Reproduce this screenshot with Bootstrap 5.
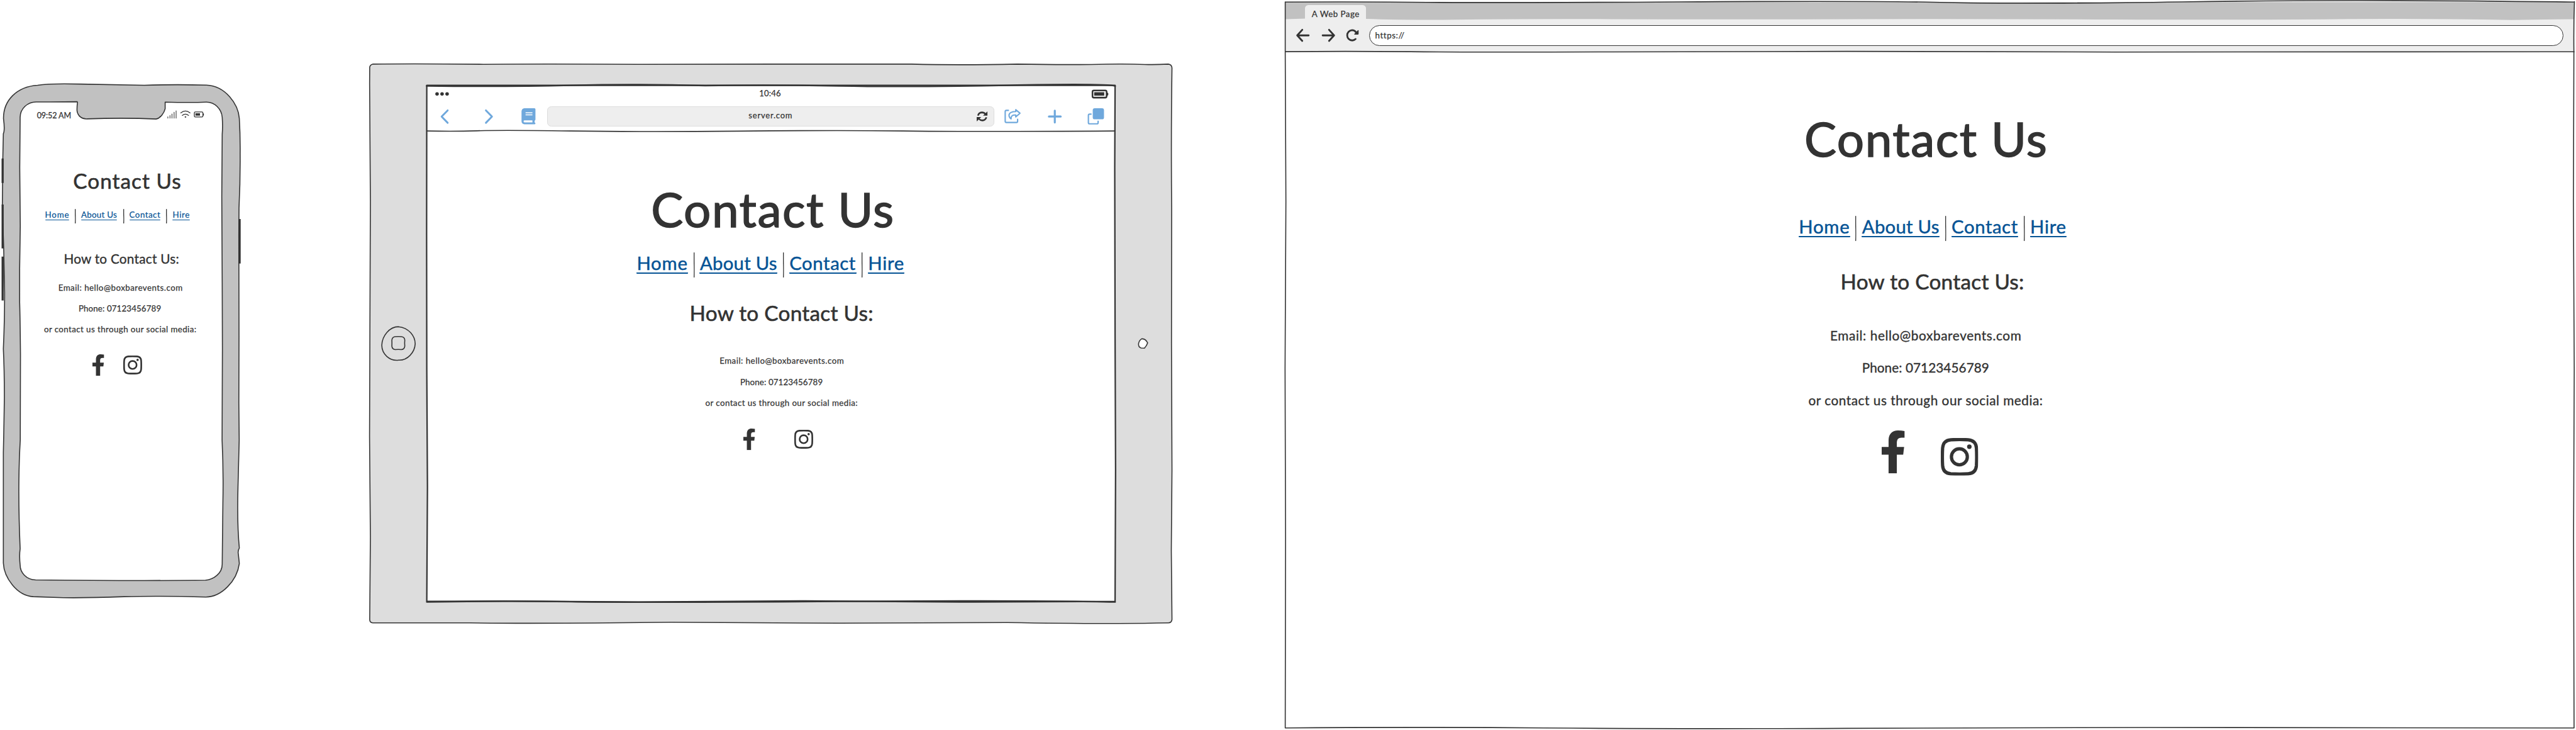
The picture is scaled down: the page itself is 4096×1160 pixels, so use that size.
<!DOCTYPE html>
<html lang="en">
<head>
<meta charset="utf-8">
<meta name="viewport" content="width=device-width, initial-scale=1">
<title>Contact Us wireframes</title>
<link href="https://cdn.jsdelivr.net/npm/bootstrap@5.3.0/dist/css/bootstrap.min.css" rel="stylesheet">
<script src="https://cdn.jsdelivr.net/npm/bootstrap@5.3.0/dist/js/bootstrap.bundle.min.js"></script>
<style>
/* --u is one drawing unit; every size below is a multiple of it */
:root{--u:.53375px;--ink:#333;--blue:#6fa8dc}
body{font-family:Lato,"Open Sans",sans-serif;color:var(--ink);background:#fff;line-height:1.2;white-space:nowrap;-webkit-text-stroke:.25px currentColor;overflow:hidden}
svg{display:block;flex:none;overflow:visible}
.board{height:1160px}
.device{height:1160px;flex:none}
.device-phone{width:calc(730*var(--u));margin-right:calc(360*var(--u));padding-top:calc(330*var(--u))}
.device-tablet{width:calc(2410*var(--u));margin-right:calc(325*var(--u));padding-top:calc(257*var(--u))}
.device-desktop{width:calc(3849*var(--u));padding-top:calc(6*var(--u))}
.frame{left:0;top:0;height:100%;z-index:-1}
.device-phone .frame{width:calc(730*var(--u))}
.device-tablet .frame{width:calc(2410*var(--u))}
.device-desktop .frame{width:calc(3849*var(--u))}
.frame path,.frame circle{stroke:var(--ink);stroke-width:3;stroke-linejoin:round;stroke-linecap:round}
.frame .heavy{stroke-width:4.2}
.frame .plain{stroke:none}

/* type */
h1,h2,p{margin:0;line-height:1.2;font-weight:400;color:var(--ink)}
.t-xl{font-size:calc(143.1*var(--u));letter-spacing:.0205em;-webkit-text-stroke-width:.02em}
.t-lg{font-size:calc(62.5*var(--u));-webkit-text-stroke-width:.018em}
.t-md{font-size:calc(38.9*var(--u));-webkit-text-stroke-width:.018em}
.t-sm{font-size:calc(25*var(--u))}
h1.t-lg{letter-spacing:.030em}
h2.t-lg{letter-spacing:.0075em}
h2.t-md{letter-spacing:.012em}
.mail{letter-spacing:.0295em}.tel{letter-spacing:.003em}.social{letter-spacing:.0252em}
.mail.t-sm{letter-spacing:.0358em}.tel.t-sm{letter-spacing:.009em}.social.t-sm{letter-spacing:.031em}

/* link bar */
.site-nav a{display:block;height:calc(65*var(--u));line-height:calc(66*var(--u));font-size:calc(54.9*var(--u));letter-spacing:.02em;text-align:center;color:#055395;text-decoration:none;border-bottom:calc(3.8*var(--u)) solid #055395;border-radius:1px;-webkit-text-stroke-width:.016em}
.site-nav .l1{width:calc(154*var(--u));letter-spacing:.027em}
.site-nav .l2{width:calc(232.6*var(--u));letter-spacing:.009em}
.site-nav .l3{width:calc(200.3*var(--u))}
.site-nav .l4{width:calc(110*var(--u));letter-spacing:.026em}
.site-nav .sep{width:calc(3*var(--u));height:calc(75*var(--u));margin:calc(1.3*var(--u)) calc(15.2*var(--u)) 0 calc(15.9*var(--u))}
.device-phone .site-nav a{height:calc(31.2*var(--u));line-height:calc(30*var(--u));font-size:calc(25*var(--u));border-bottom-width:calc(2.4*var(--u));margin-top:calc(3.3*var(--u));letter-spacing:.036em}
.device-phone .site-nav .l1{width:calc(71.3*var(--u));letter-spacing:.064em}
.device-phone .site-nav .l2{width:calc(108*var(--u));letter-spacing:.021em}
.device-phone .site-nav .l3{width:calc(93*var(--u))}
.device-phone .site-nav .l4{width:calc(51*var(--u));letter-spacing:.052em}
.device-phone .site-nav .sep{height:calc(43.5*var(--u));margin:0 calc(15.8*var(--u)) 0 calc(17.2*var(--u))}

/* phone rhythm */
.device-phone .status{font-size:calc(23.6*var(--u));letter-spacing:-.01em;margin-left:calc(110*var(--u));height:calc(28.3*var(--u))}
.status .time{width:calc(101*var(--u))}
.status .sig{margin-left:calc(288*var(--u))}
.device-phone h1{margin:calc(142*var(--u)) 0 0 calc(218*var(--u))}
.device-phone .site-nav{margin:calc(46.2*var(--u)) 0 0 calc(134*var(--u));height:calc(43.5*var(--u))}
.device-phone h2{margin:calc(82.2*var(--u)) 0 0 calc(190*var(--u))}
.device-phone .mail{margin:calc(47.1*var(--u)) 0 0 calc(173.6*var(--u))}
.device-phone .tel{margin:calc(32.3*var(--u)) 0 0 calc(234*var(--u))}
.device-phone .social{margin:calc(32.7*var(--u)) 0 0 calc(131*var(--u))}
.device-phone .icons{margin:calc(59.7*var(--u)) 0 0 calc(274.7*var(--u));gap:calc(57*var(--u))}
.fb{width:calc(35*var(--u));height:calc(64*var(--u))}
.ig{width:calc(56*var(--u));height:calc(56*var(--u));margin-top:calc(4*var(--u))}

/* tablet rhythm */
.tab-status{height:calc(46*var(--u));margin-left:calc(182*var(--u));width:calc(2049*var(--u));font-size:calc(24.3*var(--u));padding:0 calc(20*var(--u)) 0 calc(22*var(--u))}
.tab-status .clock{padding-top:calc(7*var(--u));letter-spacing:.018em;margin-right:calc(7*var(--u))}
.tab-bar{height:calc(87*var(--u));margin-left:calc(220*var(--u))}
.url-pill{width:calc(1332.3*var(--u));height:calc(61.5*var(--u));margin:0 calc(31*var(--u)) 0 calc(33.7*var(--u));background:#eee;border:calc(3.4*var(--u)) solid #ddd;border-radius:calc(12*var(--u));font-size:calc(24.3*var(--u));letter-spacing:.062em;padding:0 calc(17*var(--u)) 0 calc(50*var(--u))}
.url-pill span{padding-bottom:calc(4*var(--u))}
.device-tablet h1{margin:calc(146*var(--u)) 0 0 calc(849.7*var(--u))}
.device-tablet .site-nav{margin:calc(41.7*var(--u)) 0 0 calc(806*var(--u));height:calc(75.9*var(--u))}
.device-tablet h2{margin:calc(69.2*var(--u)) 0 0 calc(964.6*var(--u))}
.device-tablet .mail{margin:calc(89.5*var(--u)) 0 0 calc(1053.7*var(--u))}
.device-tablet .tel{margin:calc(33*var(--u)) 0 0 calc(1115*var(--u))}
.device-tablet .social{margin:calc(32*var(--u)) 0 0 calc(1011.2*var(--u))}
.device-tablet .icons{margin:calc(62*var(--u)) 0 0 calc(1124.6*var(--u));gap:calc(116.8*var(--u))}

/* desktop rhythm */
.tabstrip{height:calc(51*var(--u));padding:calc(9.5*var(--u)) 0 0 calc(63*var(--u))}
.page-tab{width:calc(182*var(--u));height:calc(42*var(--u));background:#eee;border-radius:calc(10*var(--u)) calc(10*var(--u)) 0 0;padding:calc(10.2*var(--u)) 0 0 calc(20*var(--u));letter-spacing:.036em}
.toolbar{height:calc(97*var(--u));padding-left:calc(35*var(--u))}
.address{width:calc(3558*var(--u));height:calc(61*var(--u));margin-left:calc(31*var(--u));background:#fff;border:calc(3*var(--u)) solid var(--ink);border-radius:calc(31*var(--u));padding-left:calc(16*var(--u));letter-spacing:.042em}
.device-desktop h1{margin:calc(172.4*var(--u)) 0 0 calc(1550.3*var(--u))}
.device-desktop .site-nav{margin:calc(143.1*var(--u)) 0 0 calc(1533*var(--u));height:calc(76*var(--u))}
.device-desktop h2{margin:calc(82.8*var(--u)) 0 0 calc(1658*var(--u))}
.device-desktop .mail{margin:calc(101.8*var(--u)) 0 0 calc(1627*var(--u))}
.device-desktop .tel{margin:calc(49.1*var(--u)) 0 0 calc(1722*var(--u))}
.device-desktop .social{margin:calc(49.3*var(--u)) 0 0 calc(1562.5*var(--u))}
.device-desktop .icons{margin:calc(66.7*var(--u)) 0 0 calc(1780.8*var(--u));gap:calc(107.8*var(--u))}
.device-desktop .fb{width:calc(69*var(--u));height:calc(128*var(--u))}
.device-desktop .ig{width:calc(111.5*var(--u));height:calc(112*var(--u));margin-top:calc(22*var(--u))}
</style>
</head>
<body>
<svg width="0" height="0" class="position-absolute" aria-hidden="true">
  <symbol id="fb" viewBox="0 0 35 64" preserveAspectRatio="none"><path fill="#333" d="M0 24.7H10.4V14.7C10.6 5 16 0 24.6 0Q30 0 34.6 .9V10.7H30Q23.2 10.6 22.9 17V24.7H33.9L32.5 36H22.9V64H10.4V36H0Z"/></symbol>
  <symbol id="ig" viewBox="0 0 56 56" preserveAspectRatio="none"><path fill="none" stroke="#333" stroke-width="4.9" d="M15 2.6Q28 2 41 2.6Q52.6 3.6 53.3 15Q54 28 53.3 41Q52.4 52.6 41 53.3Q28 54 15 53.3Q3.4 52.4 2.7 41Q2 28 2.7 15Q3.6 3.4 15 2.6Z"/><circle cx="27.8" cy="28" r="11.9" fill="none" stroke="#333" stroke-width="4.9"/><circle cx="42.7" cy="13" r="3.4" fill="#333"/></symbol>
  <symbol id="bar" viewBox="0 0 3 75" preserveAspectRatio="none"><path fill="none" stroke="#333" stroke-width="3" stroke-linecap="round" d="M1.500 1.500Q1.200 20 1.700 38T1.500 73.500"/></symbol>
</svg>

<main class="board d-flex">

  <section class="device device-phone position-relative">
    <svg class="frame position-absolute" viewBox="0 0 730 2174" preserveAspectRatio="none">
      <path fill="#c1c1c1" fill-rule="evenodd" d="M10.4 353C10 299 50 258 112 254Q150 248 240 250.500L430 254Q520 251 615 253.500C672 256 710 310 713 353Q716 405 715.400 458Q716 540 712 620L711.500 700L712 1000L711.500 1200L712.600 1310L709 1450Q706 1560 713 1632Q708 1640 710 1650L713 1678C706 1730 660 1778 613 1778Q470 1774 370 1777Q260 1781 189 1780L99 1777C50 1774 12 1720 10 1677L10 1348Q12 1260 13 1182Q13 1100 10 1039Q14 950 13.700 870L11 740L7 610L8.500 467L10 398Q15 388 10.400 353Z
        M60 349C60 324 82 303 108.500 303.500Q170 304 230 303L231 305Q229 318 229.500 330C232 346 244 355 260 354Q370 350 465 354.500C478 352 489 336 492 324V304Q570 306 613.500 304C640 303 660 325 662 349Q664 375 662 400L660.700 586L662 843L662.600 1039L661.600 1310Q666 1400 664 1500L662 1680C662 1708 636 1726 612 1728Q400 1730 106 1727C78 1726 60 1705 60 1683Q57 1655 60 1634Q52 1450 60.400 1310L61 1055Q60 950 58.500 900V800L60.400 673L58.800 500Z"/>
      <path class="plain" fill="#333" d="M4.700 473Q5 472 6 472H10Q11 472 11 473V545H4.700ZM4.700 609H11V740H4.700ZM4.700 764H11V895H4.700ZM711 652H717V785H711Z"/>
    </svg>

    <div class="status d-flex">
      <span class="time">09:52 AM</span>
      <svg class="sig" style="width:calc(108*var(--u));height:calc(28*var(--u))" viewBox="499 330 108 28" fill="none" stroke="#333" stroke-linecap="round">
        <path stroke-width="2" d="M500.700 352V348M507 352V344M513 352V339.500M519.300 352V334.500M525.300 352V330"/>
        <path stroke-width="2.300" d="M539 336.500Q553 325 567 336.500M543.500 344Q553 336 562.500 344"/><circle cx="553" cy="348.500" r="1.500" fill="#333" stroke-width="1.500"/>
        <rect x="579.600" y="333.600" width="25.500" height="15" rx="3" stroke-width="2.500"/><path stroke="none" fill="#333" d="M583 337.700H596.500V344.500H583ZM605.500 337.500L608 339V343.500L605.500 345Z"/>
      </svg>
    </div>
    <h1 class="t-lg">Contact Us</h1>
    <nav class="site-nav d-flex"><a class="l1" href="#">Home</a><svg class="sep"><use href="#bar"/></svg><a class="l2" href="#">About Us</a><svg class="sep"><use href="#bar"/></svg><a class="l3" href="#">Contact</a><svg class="sep"><use href="#bar"/></svg><a class="l4" href="#">Hire</a></nav>
    <h2 class="t-md">How to Contact Us:</h2>
    <p class="mail t-sm">Email: hello@boxbarevents.com</p>
    <p class="tel t-sm">Phone: 07123456789</p>
    <p class="social t-sm">or contact us through our social media:</p>
    <div class="icons d-flex"><svg class="fb"><use href="#fb"/></svg><svg class="ig"><use href="#ig"/></svg></div>
  </section>

  <section class="device device-tablet position-relative">
    <svg class="frame position-absolute" viewBox="1090 0 2410 2174" preserveAspectRatio="none">
      <path fill="#ddd" d="M1101 200Q1102 193 1110 191Q1240 189.500 1440 191.500Q1600 190 1900 191.500L2300 191Q2520 191 2715 191Q2850 194.500 3030 191Q3150 193 3250 192Q3350 189.500 3410 192Q3440 193 3480 191Q3490 192 3491 202Q3488 400 3490 620L3489.500 1023L3491 1400L3489 1640L3491 1845Q3490 1855 3480 1855Q3300 1859 3000 1854L2500 1856L2000 1853Q1600 1858 1400 1855L1110 1855Q1101 1854 1101 1845L1103 1600L1100.500 1300L1101.500 1000L1103 600L1100.700 250Z"/>
      <path class="heavy" fill="#fff" d="M1271 254L3321.500 254L3320.500 500L3321.500 1000L3323 1400L3321.500 1791L2900 1793L2400 1789.500L1900 1793L1500 1790L1271 1791L1273 1450L1271 1100L1270.500 700Z"/>
      <path class="heavy" fill="none" d="M1270 256Q1500 259 1700 254T2100 255Q2300 252 2500 256T3000 254T3322 256.500M1271 1793Q1500 1789 1700 1792T2500 1791T3322 1793"/>
      <path fill="none" stroke-width="3" d="M1272 390Q1350 392 1420 389.500T1700 390T2200 390.500Q2500 387.500 2690 390T3321 390"/>
      <path fill="none" d="M1187 973C1217 976 1236 1000 1236.500 1024C1235 1050 1213 1074 1187 1072.500C1160 1076 1137 1054 1137 1028C1138 1000 1160 973 1187 973Z"/>
      <path fill="none" d="M1176 1002.700Q1187 1001.500 1196 1002.700Q1205 1004 1205.500 1013Q1204.500 1022 1205.500 1031Q1204 1041 1195 1041Q1186 1040 1177 1041Q1168 1040 1167 1031Q1167.500 1022 1167 1013Q1168 1004 1176 1002.700Z"/>
      <path fill="#fff" d="M3401 1009Q3412 1008 3418.500 1021Q3416 1029 3409 1037Q3403 1036.500 3399 1036.500Q3390 1033 3391.500 1023Q3393 1014 3401 1009Z"/>
    </svg>

    <div class="tab-status d-flex justify-content-between">
      <svg style="width:calc(50*var(--u));height:calc(46*var(--u))" viewBox="1294 257 50 46" fill="#333"><circle cx="1301.400" cy="280" r="5.200"/><circle cx="1316.300" cy="280" r="5.200"/><circle cx="1331.300" cy="280" r="5.200"/></svg>
      <span class="clock">10:46</span>
      <svg style="width:calc(50*var(--u));height:calc(46*var(--u))" viewBox="3251 257 50 46"><rect x="3255" y="269.500" width="42" height="21.500" rx="4" fill="none" stroke="#333" stroke-width="4.800"/><path fill="#333" d="M3260 274.800H3290V285.300H3260ZM3298 275L3302 277.500V283.500L3298 286Z"/></svg>
    </div>
    <div class="tab-bar d-flex align-items-center">
      <svg style="width:calc(29*var(--u));height:calc(46*var(--u))" viewBox="0 0 29 46"><path d="M24 4.500L6 23L24 41.500" fill="none" stroke="#6fa8dc" stroke-width="5.500" stroke-linecap="round" stroke-linejoin="round"/></svg>
      <svg style="width:calc(29*var(--u));height:calc(46*var(--u));margin-left:calc(104*var(--u))" viewBox="0 0 29 46"><path d="M5 4.500L23 23L5 41.500" fill="none" stroke="#6fa8dc" stroke-width="5.500" stroke-linecap="round" stroke-linejoin="round"/></svg>
      <svg style="width:calc(43*var(--u));height:calc(48*var(--u));margin-left:calc(81*var(--u))" viewBox="0 0 43 48"><path fill="#6fa8dc" fill-rule="evenodd" d="M9 0H39Q42 0 42 3V34Q39.500 36 39.500 38.500V42Q42 43 42 45Q42 48 39 48H9Q1 47 .500 39V9Q1 1 9 0ZM12.500 12V15H33V12ZM12.500 18.200V21H33V18.200ZM9 36Q6.500 36.300 6.500 39Q6.500 41.700 9 42H33V36Z"/></svg>
      <div class="url-pill d-flex align-items-center">
        <span class="flex-fill text-center">server.com</span>
        <svg style="width:calc(33*var(--u));height:calc(30*var(--u))" viewBox="0 0 33 30"><path fill="none" stroke="#333" stroke-width="4.800" d="M4 12.500Q6 3.500 15.500 3Q22 3 26 8M29 17.500Q26 26.500 17 27Q11 27 6.500 22"/><path fill="#333" d="M32 0V12.500H19ZM0 30V17H13.500Z"/></svg>
      </div>
      <svg style="width:calc(49*var(--u));height:calc(43*var(--u))" viewBox="0 0 49 43" fill="none" stroke="#6fa8dc" stroke-width="4" stroke-linejoin="round" stroke-linecap="round"><path d="M12 4.500H6Q2.500 4.500 2.500 8V37Q2.500 40.500 6 40.500H36Q39.500 40.500 39.500 37V31"/><path d="M34 2.500L46.500 13L34 24V18.500Q19 17 20 30Q13 25 14 17Q17 8 34 8Z"/></svg>
      <svg style="width:calc(42*var(--u));height:calc(42*var(--u));margin-left:calc(79*var(--u))" viewBox="0 0 42 42"><path d="M21 3.500V38.500M3.500 21H38.500" stroke="#6fa8dc" stroke-width="6" stroke-linecap="round"/></svg>
      <svg style="width:calc(50*var(--u));height:calc(49*var(--u));margin-left:calc(76*var(--u))" viewBox="0 0 50 49"><rect x="16" y="0" width="33.500" height="33" rx="6" fill="#6fa8dc"/><path d="M12.500 17.500H7Q3 17.500 3 21V43Q3 46.500 7 46.500H28Q32 46.500 32 43V37" fill="none" stroke="#6fa8dc" stroke-width="4"/></svg>
    </div>
    <h1 class="t-xl">Contact Us</h1>
    <nav class="site-nav d-flex"><a class="l1" href="#">Home</a><svg class="sep"><use href="#bar"/></svg><a class="l2" href="#">About Us</a><svg class="sep"><use href="#bar"/></svg><a class="l3" href="#">Contact</a><svg class="sep"><use href="#bar"/></svg><a class="l4" href="#">Hire</a></nav>
    <h2 class="t-lg">How to Contact Us:</h2>
    <p class="mail t-sm">Email: hello@boxbarevents.com</p>
    <p class="tel t-sm">Phone: 07123456789</p>
    <p class="social t-sm">or contact us through our social media:</p>
    <div class="icons d-flex"><svg class="fb"><use href="#fb"/></svg><svg class="ig"><use href="#ig"/></svg></div>
  </section>

  <section class="device device-desktop position-relative">
    <svg class="frame position-absolute" viewBox="3825 0 3849 2174" preserveAspectRatio="none">
      <path class="plain" fill="#c1c1c1" d="M3828 6H7667V60H3828Z"/>
      <path class="plain" fill="#eee" d="M3828 57L3890 55.500L4070 56Q4150 59 4300 59Q4500 56 4800 57T5500 57T6300 58T7000 56.500Q7250 55 7480 59.500L7667 57V154H3828Z"/>
      <path fill="none" stroke-width="3.200" d="M3828 5.500V154L3830 600L3827.500 1100L3829 1600L3828 2168M7668.500 5Q7666 80 7667 154L7665.500 600L7668 1100L7666 1600L7667.500 2168M3828 6Q4100 5 4250 7T5000 5.500T5800 7.500T6500 5.500T7668 6M3828 154Q4000 152 4200 154T4800 154.500T5500 153T6300 155T7668 154M3828 2168Q4200 2164.500 4600 2168T5500 2169T6400 2166.500T7667 2168"/>
    </svg>

    <div class="tabstrip"><div class="page-tab t-sm">A Web Page</div></div>
    <div class="toolbar d-flex align-items-center">
      <svg style="width:calc(43*var(--u));height:calc(42*var(--u))" viewBox="0 0 43 42"><path d="M20 4.500L5 21L20 37.500M5 21H39" fill="none" stroke="#333" stroke-width="5.400" stroke-linecap="round" stroke-linejoin="round"/></svg>
      <svg style="width:calc(43*var(--u));height:calc(42*var(--u));margin-left:calc(34*var(--u))" viewBox="0 0 43 42"><path d="M23 4.500L38 21L23 37.500M38 21H4" fill="none" stroke="#333" stroke-width="5.400" stroke-linecap="round" stroke-linejoin="round"/></svg>
      <svg style="width:calc(39*var(--u));height:calc(38*var(--u));margin-left:calc(29*var(--u))" viewBox="0 0 39 38"><path d="M29 30Q24.500 34 19 34.200C10 34 4 27 4 19S10 4 18.500 3.500Q26 3.500 30.500 10" fill="none" stroke="#333" stroke-width="5.200" stroke-linecap="round"/><path fill="#333" d="M36.500 3.500Q38.500 4 38 6V15Q37.500 17 36 17H26Q23.500 16 25.500 14.500Z"/></svg>
      <div class="address d-flex align-items-center t-sm">https://</div>
    </div>
    <h1 class="t-xl">Contact Us</h1>
    <nav class="site-nav d-flex"><a class="l1" href="#">Home</a><svg class="sep"><use href="#bar"/></svg><a class="l2" href="#">About Us</a><svg class="sep"><use href="#bar"/></svg><a class="l3" href="#">Contact</a><svg class="sep"><use href="#bar"/></svg><a class="l4" href="#">Hire</a></nav>
    <h2 class="t-lg">How to Contact Us:</h2>
    <p class="mail t-md">Email: hello@boxbarevents.com</p>
    <p class="tel t-md">Phone: 07123456789</p>
    <p class="social t-md">or contact us through our social media:</p>
    <div class="icons d-flex"><svg class="fb"><use href="#fb"/></svg><svg class="ig"><use href="#ig"/></svg></div>
  </section>

</main>
</body>
</html>
